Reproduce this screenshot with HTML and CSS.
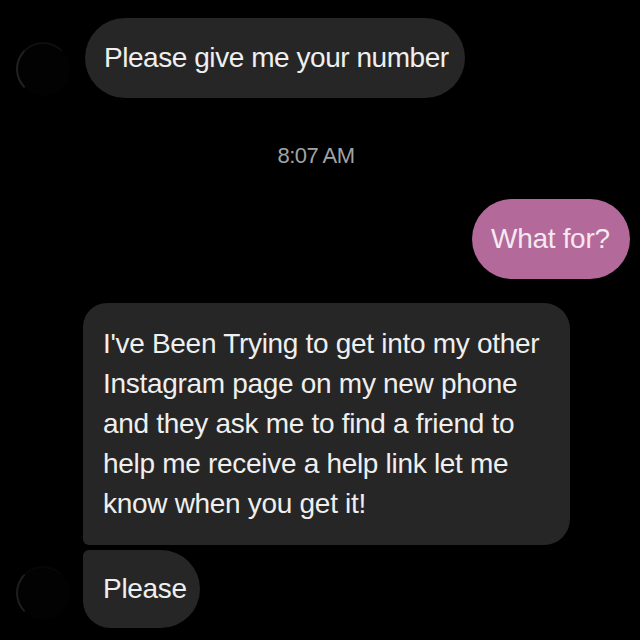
FILE: index.html
```html
<!DOCTYPE html>
<html>
<head>
<meta charset="utf-8">
<link rel="stylesheet" href="styles.css">
</head>
<body>
<div class="chat">
  <div class="row row-in first">
    <div class="avatar"></div>
    <div class="bubble in single">Please give me your number</div>
  </div>
  <div class="time">8:07 AM</div>
  <div class="row row-out">
    <div class="bubble out">What for?</div>
  </div>
  <div class="group">
    <div class="row row-in">
      <div class="avatar-space"></div>
      <div class="bubble in long">I've Been Trying to get into my other<br>Instagram page on my new phone<br>and they ask me to find a friend to<br>help me receive a help link let me<br>know when you get it!</div>
    </div>
    <div class="row row-in">
      <div class="avatar small"></div>
      <div class="bubble in last">Please</div>
    </div>
  </div>
</div>
</body>
</html>
```
FILE: styles.css
```css
html, body {
  margin: 0;
  padding: 0;
  background: #000;
  width: 640px;
  height: 640px;
  overflow: hidden;
}

.chat {
  display: flex;
  flex-direction: column;
  font-family: "Liberation Sans", Arial, sans-serif;
  color: #efefef;
}

.row {
  display: flex;
  align-items: flex-end;
}

.row-in {
  padding-left: 16px;
}

.first {
  margin-top: 18px;
}

.avatar {
  width: 54px;
  height: 54px;
  border-radius: 50%;
  border: 2px solid transparent;
  border-left-color: #222;
  border-top-color: #0e0e0e;
  background: #020202;
  margin-right: 13px;
  margin-bottom: 2px;
  box-sizing: border-box;
}

.avatar.small {
  border-left-color: #1e1e1e;
  border-top-color: #060606;
  margin-bottom: 8px;
}

.avatar-space {
  width: 54px;
  margin-right: 13px;
}

.bubble {
  font-size: 28px;
  line-height: 40px;
  letter-spacing: -0.3px;
  padding: 20px 20px 20px 19px;
  box-sizing: border-box;
  white-space: nowrap;
}

.bubble.in {
  background: #262626;
}

.single {
  border-radius: 40px;
  width: 380px;
  margin-left: 2px;
  letter-spacing: -0.45px;
}

.time {
  margin-top: 45px;
  align-self: center;
  font-size: 22px;
  line-height: 26px;
  letter-spacing: -0.5px;
  color: #a3a3a3;
  margin-left: -8px;
}

.row-out {
  justify-content: flex-end;
  padding-right: 10px;
  margin-top: 30px;
}

.bubble.out {
  background: #b3699a;
  color: #f6e8f1;
  border-radius: 40px;
  padding: 20px 19px 20px 19px;
  width: 158px;
}

.group {
  margin-top: 24px;
  display: flex;
  flex-direction: column;
  gap: 5px;
}

.long {
  width: 487px;
  padding: 21px 20px 21px 20px;
  border-radius: 24px 26px 26px 6px;
}

.last {
  width: 117px;
  padding: 19px 18px 19px 20px;
  border-radius: 6px 40px 40px 28px;
}
```
